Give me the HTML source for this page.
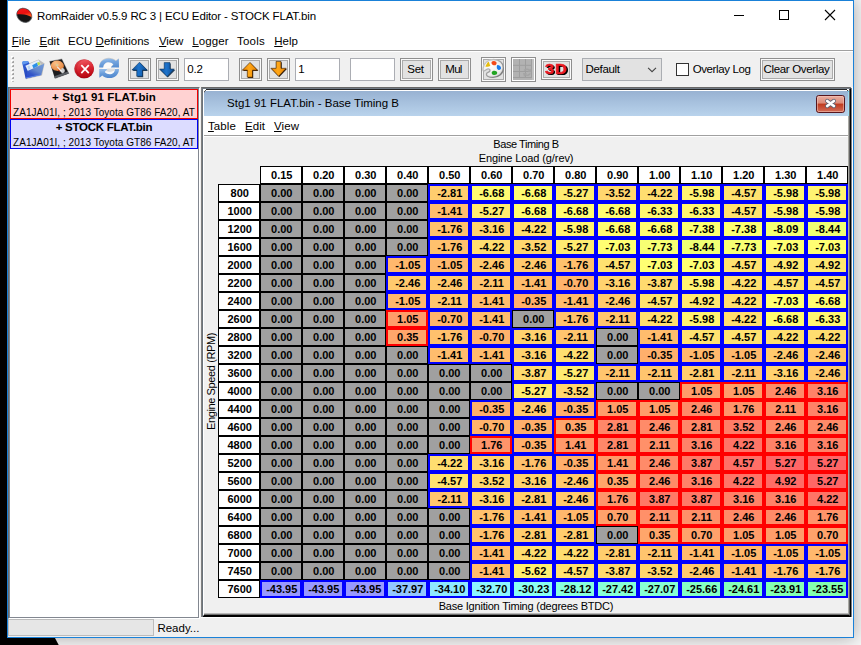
<!DOCTYPE html>
<html>
<head>
<meta charset="utf-8">
<title>RomRaider</title>
<style>
*{box-sizing:border-box;margin:0;padding:0}
html,body{width:861px;height:645px;overflow:hidden}
body{position:relative;background:#f5f5f5;font-family:"Liberation Sans",sans-serif;font-size:12px;color:#000}
.a{position:absolute}
#shadowR{left:854px;top:0;width:7px;height:645px;background:linear-gradient(to right,#d0cdca,#e7e7e7)}
#shadowB{left:0;top:638px;width:861px;height:7px;background:linear-gradient(to bottom,#cfcfcf,#e6e6e6)}
#blackL{left:0;top:0;width:7px;height:645px;background:#000}
#win{left:7px;top:0;width:847px;height:638px;border:1px solid #1a81d8;background:#f0f0f0;box-shadow:0 0 16px 0 rgba(8,4,0,0.32)}
#titlebar{left:8px;top:1px;width:845px;height:30px;background:#fff}
#title{left:37px;top:8.5px;font-size:11.5px;white-space:nowrap;line-height:15px}
#menubar{left:8px;top:31px;width:845px;height:19px;background:#fff}
#menuline{left:8px;top:50px;width:845px;height:1px;background:#a0a0a0}
#menuline2{left:8px;top:51px;width:845px;height:1px;background:#fff}
.mi{position:absolute;top:33.5px;font-size:11.5px;line-height:15px;white-space:nowrap}
.mi u{text-decoration:underline;text-underline-offset:1px}
#toolbar{left:8px;top:52px;width:845px;height:35px;background:#f0f0f0}
.tb{position:absolute;border:1px solid #8e8e8e;background:#e2e2e2;box-shadow:inset 0 0 0 1px #fafafa, inset 0 0 0 2px #ababab}
.tf{position:absolute;border:1px solid #abadb3;background:#fff;font-size:11.5px;line-height:21px;padding-left:2.2px;letter-spacing:-0.15px}
.bt{font-size:11.5px;text-align:center;line-height:21px;letter-spacing:-0.33px;padding-right:2px}
/* tree */
#tree{left:8px;top:87px;width:192px;height:532px;background:#fff;border-style:solid;border-width:1px;border-color:#6d6d6d #fff #fff #6d6d6d}
#tree2{left:9px;top:88px;width:190px;height:530px;background:#fff;border-style:solid;border-width:1px;border-color:#7a8a99 #828790 #828790 #7a8a99}
.ti{position:absolute;left:10px;width:188px;height:30px;text-align:center;white-space:nowrap;overflow:hidden}
.ti b{display:block;font-size:11.5px;line-height:14px;margin-top:0px}
.ti span{display:block;font-size:10px;line-height:13px;margin-top:1.5px;letter-spacing:0.04px}
/* internal frame */
#if1{left:201px;top:87px;width:651px;height:530px;background:#f0f0f0}
#iftitle{left:204px;top:91px;width:644px;height:25px;background:linear-gradient(to bottom,#98b2d2,#b9d3ec)}
#iftext{left:227px;top:96px;font-size:11.5px;line-height:15px;white-space:nowrap}
#ifmenu{left:204px;top:116px;width:644px;height:19px;background:#fff}
#ifmenuline{left:204px;top:135px;width:644px;height:1px;background:#a0a0a0}
#ifmenuline2{left:204px;top:136px;width:644px;height:1px;background:#fff}
.lbl{position:absolute;font-size:11px;line-height:13px;white-space:nowrap;text-align:center}
/* cells */
.c{position:absolute;width:42px;height:18px;font-weight:bold;font-size:11px;line-height:16px;text-align:center;border:1px solid #000;white-space:nowrap;padding-left:1.5px}
.h{background:#fff}
.z{background:#a0a0a0}
.n{border:2px solid #0000ff;line-height:14px}
.p{border:2px solid #ff0000;line-height:14px}
#status{left:8px;top:619px;width:845px;height:18px;background:#f0f0f0}
#prog{left:8px;top:619px;width:146px;height:17px;background:#e6e6e6;border:1px solid #bcbcbc}
#ready{left:157.4px;top:621.4px;font-size:11.5px;line-height:15px}
</style>
</head>
<body>
<div class="a" id="win"></div>
<div class="a" id="blackL"></div>
<svg class="a" style="left:0;top:638px" width="70" height="7"><polygon points="0,0 55,0 58.7,7 0,7" fill="#000"/></svg>
<div class="a" id="titlebar"></div>
<svg class="a" style="left:14px;top:5px" width="20" height="20" viewBox="14 5 20 20">
<defs><linearGradient id="rg" x1="0" y1="0" x2="0.4" y2="1"><stop offset="0" stop-color="#ff2020"/><stop offset="0.7" stop-color="#e81010"/><stop offset="1" stop-color="#ff5a20"/></linearGradient>
<clipPath id="icp"><ellipse cx="24.3" cy="15.3" rx="7.7" ry="6.5" transform="rotate(35 24.3 15.3)"/></clipPath></defs>
<ellipse cx="24.3" cy="15.3" rx="7.9" ry="6.7" transform="rotate(35 24.3 15.3)" fill="#141414" stroke="#565a5e" stroke-width="0.9" stroke-opacity="0.8"/>
<path d="M14 5 L34 5 L34 18.2 C31 17.4 29 15.2 24 14.6 C20.5 14.2 18 14.4 14 14.2 Z" fill="url(#rg)" clip-path="url(#icp)"/>
</svg>
<div class="a" id="title" style="letter-spacing:-0.145px">RomRaider v0.5.9 RC 3 | ECU Editor - STOCK FLAT.bin</div>
<svg class="a" style="left:730px;top:5px" width="115" height="22">
<rect x="4" y="10" width="10" height="1" fill="#000"/>
<rect x="49.5" y="5.5" width="9" height="9" fill="none" stroke="#000" stroke-width="1"/>
<path d="M95 5 L105 15 M105 5 L95 15" stroke="#000" stroke-width="1.1" fill="none"/>
</svg>
<div class="a" id="menubar"></div>
<div class="a" id="menuline"></div>
<div class="a" id="menuline2"></div>
<div class="mi" style="left:11.8px"><u>F</u>ile</div>
<div class="mi" style="left:39.4px;letter-spacing:0.05px"><u>E</u>dit</div>
<div class="mi" style="left:68.1px">ECU <u>D</u>efinitions</div>
<div class="mi" style="left:159px;letter-spacing:-0.15px"><u>V</u>iew</div>
<div class="mi" style="left:192.3px;letter-spacing:0.1px"><u>L</u>ogger</div>
<div class="mi" style="left:237px;letter-spacing:0.22px">Tools</div>
<div class="mi" style="left:274.2px;letter-spacing:0.05px"><u>H</u>elp</div>
<div class="a" id="toolbar"></div>
<svg class="a" style="left:11px;top:56px" width="4" height="28"><rect x="0" y="0" width="2" height="2" fill="#fff"/><rect x="2" y="1" width="1" height="2" fill="#a4a4a4"/><rect x="1" y="2" width="1" height="1" fill="#a4a4a4"/><rect x="1" y="1" width="1" height="1" fill="#d4d4d4"/><rect x="0" y="4" width="2" height="2" fill="#fff"/><rect x="2" y="5" width="1" height="2" fill="#a4a4a4"/><rect x="1" y="6" width="1" height="1" fill="#a4a4a4"/><rect x="1" y="5" width="1" height="1" fill="#d4d4d4"/><rect x="0" y="8" width="2" height="2" fill="#fff"/><rect x="2" y="9" width="1" height="2" fill="#a4a4a4"/><rect x="1" y="10" width="1" height="1" fill="#a4a4a4"/><rect x="1" y="9" width="1" height="1" fill="#d4d4d4"/><rect x="0" y="12" width="2" height="2" fill="#fff"/><rect x="2" y="13" width="1" height="2" fill="#a4a4a4"/><rect x="1" y="14" width="1" height="1" fill="#a4a4a4"/><rect x="1" y="13" width="1" height="1" fill="#d4d4d4"/><rect x="0" y="16" width="2" height="2" fill="#fff"/><rect x="2" y="17" width="1" height="2" fill="#a4a4a4"/><rect x="1" y="18" width="1" height="1" fill="#a4a4a4"/><rect x="1" y="17" width="1" height="1" fill="#d4d4d4"/><rect x="0" y="20" width="2" height="2" fill="#fff"/><rect x="2" y="21" width="1" height="2" fill="#a4a4a4"/><rect x="1" y="22" width="1" height="1" fill="#a4a4a4"/><rect x="1" y="21" width="1" height="1" fill="#d4d4d4"/><rect x="0" y="24" width="2" height="2" fill="#fff"/><rect x="1" y="25" width="2" height="1" fill="#c0c0c0"/></svg>
<svg class="a" style="left:20px;top:57px" width="27" height="24" viewBox="20 57 27 24">
<defs><linearGradient id="fo1" x1="0" y1="0" x2="0.3" y2="1"><stop offset="0" stop-color="#5a96ee"/><stop offset="0.3" stop-color="#2f5cd2"/><stop offset="1" stop-color="#2444b8"/></linearGradient>
<linearGradient id="fo2" x1="0.9" y1="0" x2="0.2" y2="1"><stop offset="0" stop-color="#6e98da"/><stop offset="0.45" stop-color="#6488cc"/><stop offset="0.75" stop-color="#3356c8"/><stop offset="1" stop-color="#2a4ad0"/></linearGradient>
<filter id="fbl" x="-20%" y="-20%" width="140%" height="140%"><feGaussianBlur stdDeviation="0.7"/></filter></defs>
<path d="M25 65 L38.6 59.4 L44.6 63.6 L42 75.6 L26 79.2 Z" fill="#808080" opacity="0.45" filter="url(#fbl)"/>
<path d="M22.2 63 C22.2 61.6 23 61.2 24 61.1 L27 60.9 C28 60.9 28.6 61.6 29 62.6 L30 66 L27 78 L25.6 78.4 Z" fill="url(#fo1)"/>
<path d="M22.3 62.8 C22.3 61.6 23 61.2 24 61.1 L27 60.9 C28 60.9 28.6 61.6 28.9 62.4 L26 63.8 L22.6 64.6 Z" fill="#5f98ee"/><path d="M25.4 65.7 L38.4 60.1 L40.8 64.2 L28 71.5 Z" fill="#e4eefa"/>
<path d="M27.4 66.2 L29.4 65.4 L30.6 69 L28.6 70 Z" fill="#b8d4f4"/>
<path d="M32.2 65.2 L37.2 62.6 L38 66 L33.4 68.4 Z" fill="#2a90e8"/>
<path d="M37.2 62.6 L39.4 61.9 L40.4 64.3 L38 65.6 Z" fill="#b4dc50"/>
<path d="M27.3 71 L44.2 63.8 L41.2 75 L25.8 78.5 Z" fill="url(#fo2)"/>
<path d="M26.2 77.6 L41 74.2 L41.2 75 L25.8 78.5 Z" fill="#5f86e6"/>
</svg>
<svg class="a" style="left:47px;top:56px" width="25" height="25" viewBox="47 56 25 25">
<defs><radialGradient id="dk1" cx="0.35" cy="0.3" r="0.8"><stop offset="0" stop-color="#fac088"/><stop offset="0.6" stop-color="#ee9a58"/><stop offset="1" stop-color="#d87830"/></radialGradient>
<filter id="dbl" x="-20%" y="-20%" width="140%" height="140%"><feGaussianBlur stdDeviation="0.6"/></filter></defs>
<path d="M49.2 61 L62 58.6 L69.4 73.6 L55 79 Z" fill="#777" opacity="0.5" filter="url(#dbl)"/>
<path d="M49.6 61.4 L61.8 59.2 L68.7 73.5 L54.9 78.3 Z" fill="#1c1c1e"/>
<path d="M54.2 76.2 L67.8 71.6 L68.7 73.5 L54.9 78.3 Z" fill="#5a5e64"/>
<ellipse cx="57.4" cy="65.7" rx="6.5" ry="5.2" fill="url(#dk1)" transform="rotate(8 57.4 65.7)"/>
<path d="M61.6 68.2 C63.4 67.8 64.6 69 64.8 70.8 C64.8 72.2 63.6 73.2 62 73.4 L60.6 71.2 Z" fill="#cfd0d2"/>
<rect x="55.8" y="63.9" width="2.6" height="2.2" rx="0.6" fill="#dccb9a"/>
<path d="M56.6 66.8 L57.6 66.4 L62.2 71 L61 72 Z" fill="#eeeeee"/>
<path d="M58.4 69.6 L60 71.2 L59.4 71.8 L58 70.6 Z" fill="#b82c10"/>
</svg>
<svg class="a" style="left:72px;top:57px" width="24" height="24" viewBox="72 57 24 24">
<defs><linearGradient id="rx1" x1="0.3" y1="0" x2="0.6" y2="1"><stop offset="0" stop-color="#e04650"/><stop offset="0.5" stop-color="#c81824"/><stop offset="1" stop-color="#a00010"/></linearGradient>
<linearGradient id="rx2" x1="0.3" y1="0" x2="0.5" y2="1"><stop offset="0" stop-color="#ee5860"/><stop offset="0.5" stop-color="#d82430"/><stop offset="1" stop-color="#b4040e"/></linearGradient>
<filter id="xbl" x="-20%" y="-20%" width="140%" height="140%"><feGaussianBlur stdDeviation="0.6"/></filter></defs>
<ellipse cx="84.1" cy="69" rx="10" ry="9.7" fill="#888" opacity="0.4" filter="url(#xbl)"/>
<ellipse cx="84.1" cy="68.8" rx="9.8" ry="9.5" fill="url(#rx1)"/>
<ellipse cx="85.4" cy="68.8" rx="8.4" ry="9.0" fill="url(#rx2)"/>
<path d="M81.3 65.2 L88.8 73.2 M88.8 65.2 L81.3 73.2" stroke="#fff" stroke-width="1.7" stroke-linecap="butt"/>
</svg>
<svg class="a" style="left:96px;top:55px" width="26" height="26" viewBox="96 55 26 26">
<defs><linearGradient id="rf1" x1="0" y1="0" x2="0.2" y2="1"><stop offset="0" stop-color="#a6caf0"/><stop offset="0.35" stop-color="#7aaae2"/><stop offset="1" stop-color="#5a90d2"/></linearGradient>
<linearGradient id="rf2" x1="0" y1="0" x2="0.2" y2="1"><stop offset="0" stop-color="#4a82ca"/><stop offset="0.6" stop-color="#669ad8"/><stop offset="1" stop-color="#8eb8e8"/></linearGradient>
<filter id="rbl" x="-20%" y="-20%" width="140%" height="140%"><feGaussianBlur stdDeviation="0.7"/></filter></defs>
<ellipse cx="109.4" cy="68.4" rx="7" ry="6" fill="#fafafa" filter="url(#rbl)"/>
<path d="M104 69.6 C106 72.4 112 72.8 115.4 69.8 L115 68.6 L108 68.6 Z" fill="#c4c6c8" opacity="0.55" filter="url(#rbl)"/>
<path d="M99.2 67.6 C99.2 62 103.5 58.4 108.6 58.4 C111.5 58.4 114 59.4 115.9 61.1 L118.8 58.8 L119 67.6 L110.8 67.5 L113.5 64.4 C112 63 110.4 62.2 108.6 62.2 C105.6 62.2 103.4 64.2 103.2 67.6 Z" fill="#8a8a8a" opacity="0.35" filter="url(#rbl)" transform="translate(0,-0.6)"/>
<path d="M99.2 67.6 C99.2 62 103.5 58.4 108.6 58.4 C111.5 58.4 114 59.4 115.9 61.1 L118.8 58.8 L119 67.6 L110.8 67.5 L113.5 64.4 C112 63 110.4 62.2 108.6 62.2 C105.6 62.2 103.4 64.2 103.2 67.6 Z" fill="url(#rf1)"/>
<path d="M99.2 67.6 C99.2 62 103.5 58.4 108.6 58.4 C111.5 58.4 114 59.4 115.9 61.1 L118.8 58.8 L119 67.6 L110.8 67.5 L113.5 64.4 C112 63 110.4 62.2 108.6 62.2 C105.6 62.2 103.4 64.2 103.2 67.6 Z" fill="url(#rf2)" transform="rotate(180 109.1 68.25)"/>
</svg>
<div class="tb" style="left:128px;top:58px;width:23px;height:23px"><svg width="23" height="23" viewBox="0 0 23 23" style="position:absolute;left:-1px;top:-1px">
<defs><linearGradient id="g1e74ccu" x1="0" y1="0" x2="1" y2="0"><stop offset="0" stop-color="#0c4c94"/><stop offset="0.45" stop-color="#1e74cc"/><stop offset="1" stop-color="#0c4c94"/></linearGradient></defs>
<path d="M11.6 4.4 L19.4 12.2 L14.6 12.2 L14.6 18.6 L8.8 18.6 L8.8 12.2 L4.0 12.2 Z" fill="#082848" transform="translate(0.6,0.7)" opacity="0.85"/>
<path d="M11.5 4.2 L19.2 12 L14.5 12 L14.5 18.3 L8.7 18.3 L8.7 12 L3.9 12 Z" fill="url(#g1e74ccu)" stroke="#082848" stroke-width="0.5"/>
</svg></div>
<div class="tb" style="left:156px;top:58px;width:23px;height:23px"><svg width="23" height="23" viewBox="0 0 23 23" style="position:absolute;left:-1px;top:-1px">
<defs><linearGradient id="g1e74ccd" x1="0" y1="0" x2="1" y2="0"><stop offset="0" stop-color="#0c4c94"/><stop offset="0.45" stop-color="#1e74cc"/><stop offset="1" stop-color="#0c4c94"/></linearGradient></defs>
<path d="M8.3 4.8 L14.1 4.8 L14.1 11.2 L18.6 11.2 L11.2 18.8 L3.6 11.2 L8.3 11.2 Z" fill="#082848" transform="translate(0.6,0.7)" opacity="0.85"/>
<path d="M8.2 4.6 L14 4.6 L14 11 L18.4 11 L11.1 18.6 L3.5 11 L8.2 11 Z" fill="url(#g1e74ccd)" stroke="#082848" stroke-width="0.5"/>
</svg></div>
<div class="tf" style="left:184px;top:58px;width:45px;height:23px">0.2</div>
<div class="tb" style="left:239px;top:58px;width:23px;height:23px"><svg width="23" height="23" viewBox="0 0 23 23" style="position:absolute;left:-1px;top:-1px">
<defs><linearGradient id="gffa818u" x1="0" y1="0" x2="1" y2="0"><stop offset="0" stop-color="#e88000"/><stop offset="0.45" stop-color="#ffa818"/><stop offset="1" stop-color="#e88000"/></linearGradient></defs>
<path d="M11 4.4 L18.6 12.2 L13.5 12.2 L13.5 19.2 L8.3 19.2 L8.3 12.2 L3.3 12.2 Z" fill="#1c0c00" transform="translate(0.7,0.8)" opacity="0.95"/>
<path d="M11 4.4 L18.6 12.2 L13.5 12.2 L13.5 19.2 L8.3 19.2 L8.3 12.2 L3.3 12.2 Z" fill="url(#gffa818u)" stroke="#301800" stroke-width="0.6"/>
</svg></div>
<div class="tb" style="left:267px;top:58px;width:23px;height:23px"><svg width="23" height="23" viewBox="0 0 23 23" style="position:absolute;left:-1px;top:-1px">
<defs><linearGradient id="gffa818d" x1="0" y1="0" x2="1" y2="0"><stop offset="0" stop-color="#e88000"/><stop offset="0.45" stop-color="#ffa818"/><stop offset="1" stop-color="#e88000"/></linearGradient></defs>
<path d="M9.1 3.4 L14 3.4 L14 10.3 L19.2 10.3 L11.6 18.3 L3.9 10.3 L9.1 10.3 Z" fill="#1c0c00" transform="translate(0.7,0.8)" opacity="0.95"/>
<path d="M9.1 3.4 L14 3.4 L14 10.3 L19.2 10.3 L11.6 18.3 L3.9 10.3 L9.1 10.3 Z" fill="url(#gffa818d)" stroke="#301800" stroke-width="0.6"/>
</svg></div>
<div class="tf" style="left:295px;top:58px;width:45px;height:23px">1</div>
<div class="tf" style="left:350px;top:58px;width:45px;height:23px"></div>
<div class="tb bt" style="left:400px;top:58px;width:33px;height:23px">Set</div>
<div class="tb bt" style="left:438px;top:58px;width:33px;height:23px;letter-spacing:-0.66px">Mul</div>
<div class="tb" style="left:481px;top:57px;width:25px;height:25px"><svg width="25" height="25" viewBox="0 0 25 25" style="position:absolute;left:-1px;top:-1px">
<defs><radialGradient id="pl1" cx="0.4" cy="0.35" r="0.8"><stop offset="0" stop-color="#ffffff"/><stop offset="0.65" stop-color="#ececec"/><stop offset="1" stop-color="#b4b4b4"/></radialGradient>
<linearGradient id="pl2" x1="0" y1="0" x2="1" y2="1"><stop offset="0" stop-color="#d8d8d8"/><stop offset="0.5" stop-color="#a0a0a0"/><stop offset="1" stop-color="#6e6e6e"/></linearGradient></defs>
<path d="M12.6 2.5 C18.8 2.5 22.4 6.4 22.4 11 C22.4 16.6 17.6 20.4 12 20.4 C8.4 20.4 5.6 19 5.4 17.2 C5.2 15.8 6.8 15.4 8 14.8 C9.2 14.2 9.4 12.6 8 12 C6.4 11.4 4.4 13.4 3 14 C2 14.4 1.9 12.6 2 11.4 C2.6 6.2 7 2.5 12.6 2.5 Z" fill="url(#pl1)" stroke="url(#pl2)" stroke-width="1.3"/>
<path d="M4.2 9.2 C5.4 8.6 5.8 6 6.8 5.2 C7.6 4.8 8.2 5.4 8.4 6.4 C8.6 7.6 9.6 8.2 9.2 9 C8 9.8 5.4 10 4.2 9.2 Z" fill="#e6bc0c"/>
<path d="M10.6 5 C11.4 3.8 14 3.8 15.2 5 C16 6 15.6 7.6 14.4 8.2 C13.2 8.6 11.4 8 10.8 7 C10.4 6.4 10.4 5.6 10.6 5 Z" fill="#f44a1a"/>
<path d="M16.2 8.2 C17.6 7.8 19.6 9 20 10.8 C20.2 12.2 19 13.2 17.6 13 C16.4 12.6 15.6 11.4 15.8 10 C15.8 9.2 15.8 8.6 16.2 8.2 Z" fill="#1a7cec"/>
<path d="M10.8 15 C11.8 13.6 14.2 13.4 15.6 14.6 C16.6 15.4 16.4 16.8 15.4 17.6 C14 18.4 11.8 18.2 11 17 C10.6 16.4 10.6 15.6 10.8 15 Z" fill="#22a422"/>
</svg></div>
<div class="a" style="left:511px;top:57px;width:25px;height:25px;border:1px solid #8e8e8e;background:#fff"><svg width="21" height="21" viewBox="0 0 21 21" style="position:absolute;left:1px;top:1px">
<rect x="0" y="0" width="21" height="21" fill="#b2b2b2"/>
<path d="M6.5 0 V19 M12.5 0 V19 M18.5 0 V19 M0 6.3 H19 M0 12.5 H19 M0 18.5 H19" stroke="#9e9e9e" stroke-width="1"/>
<rect x="19" y="0" width="2" height="21" fill="#c8c8c8" opacity="0.7"/>
<path d="M10.5 11 C12 9.4 15 9 17 10.4 L18.2 9.2 L18.4 13.2 L14.4 13 L15.6 11.8 C14.4 11 12.8 11.2 12 12.2 Z" fill="#a4a4a4"/>
<path d="M18 14.4 C17 16.6 14.4 17.6 12 16.6 L11 18 L10 14 L14 14.2 L13 15.4 C14.2 15.8 15.6 15.4 16.2 14.2 Z" fill="#a4a4a4"/>
</svg></div>
<div class="tb" style="left:541px;top:59px;width:31px;height:21px"><div style="position:absolute;left:1.5px;top:0px;width:25px;text-align:center;font-weight:bold;font-size:15px;line-height:18.6px;color:#ea1a22;text-shadow:1px 1px 0 #000,1.4px 1.4px 0 #000;-webkit-text-stroke:0.5px #ea1a22;letter-spacing:0.9px;transform:scaleX(1.1);transform-origin:50% 50%">3D</div></div>
<div class="a ol" style="left:582px;top:58px;width:80px;height:23px;border:1px solid #abaeb3;background:#e2e2e2;font-size:11.5px;line-height:21px;padding-left:2.4px;letter-spacing:-0.3px">Default</div>
<svg class="a" style="left:647px;top:66px" width="10" height="7"><path d="M1.1 1.9 L5.05 5.7 L9 1.9" stroke="#444" stroke-width="1.1" fill="none"/></svg>
<div class="a" style="left:676px;top:63px;width:13px;height:13px;border:1px solid #333;background:#fff"></div>
<div class="a ol" style="left:692.7px;top:62px;font-size:11.5px;letter-spacing:-0.39px;line-height:15px;white-space:nowrap">Overlay Log</div>
<div class="tb bt" style="left:760px;top:58px;width:75px;height:23px;white-space:nowrap">Clear Overlay</div>
<div class="a" id="tree"></div>
<div class="a" id="tree2"></div>
<div class="ti" style="top:89px;border:1px solid #f20000;background:#ffd2d2"><b style="letter-spacing:0.13px">+ Stg1 91 FLAT.bin</b><span>ZA1JA01I, ; 2013 Toyota GT86 FA20, AT</span></div>
<div class="ti" style="top:119px;border:1px solid #0000f2;background:#dcdcff"><b style="letter-spacing:-0.27px">+ STOCK FLAT.bin</b><span>ZA1JA01I, ; 2013 Toyota GT86 FA20, AT</span></div>
<div class="a" id="if1"></div>
<div class="a" style="left:201px;top:87px;width:650px;height:530px;border-style:solid;border-width:1px;border-color:#686868 #8a8a8a #000 #808080;pointer-events:none"></div>
<div class="a" style="left:202px;top:88px;width:649px;height:529px;border-style:solid;border-width:1px;border-color:#717a84 #000 #000 #6a727a"></div>
<div class="a" style="left:203px;top:89px;width:647px;height:527px;border-style:solid;border-width:1px;border-color:#262626 #646464 #000 #fff"></div>
<div class="a" style="left:204px;top:90px;width:645px;height:1px;background:#fff"></div>
<div class="a" style="left:204px;top:613px;width:645px;height:1px;background:#b8b8b8"></div><div class="a" style="left:204px;top:614px;width:646px;height:1px;background:#707070"></div><div class="a" style="left:201px;top:617px;width:651px;height:1px;background:#fff"></div><div class="a" style="left:851px;top:88px;width:1px;height:529px;background:#7a7c82"></div><div class="a" style="left:852px;top:87px;width:1px;height:531px;background:#fff"></div>
<div class="a" style="left:848px;top:91px;width:1px;height:523px;background:#aaaaa4"></div>

<div class="a" style="left:201px;top:613px;width:1px;height:4px;background:#808080"></div><div class="a" style="left:202px;top:613px;width:1px;height:4px;background:#6a727a"></div>
<div class="a" id="iftitle"></div>
<div class="a" style="left:848px;top:91px;width:1px;height:25px;background:#9fdcf0"></div>
<svg class="a" style="left:203px;top:89px" width="5" height="5"><rect x="0" y="0" width="3" height="1" fill="#fff"/><rect x="0" y="1" width="2" height="1" fill="#fff"/><rect x="2" y="1" width="1" height="1" fill="#555"/><rect x="1" y="2" width="1" height="1" fill="#555"/><rect x="1" y="3" width="1" height="1" fill="#8a9ab0"/></svg>
<svg class="a" style="left:845px;top:89px" width="5" height="5"><rect x="2" y="0" width="2" height="1" fill="#fff"/><rect x="2" y="1" width="1" height="1" fill="#444"/><rect x="3" y="1" width="1" height="1" fill="#ddd"/><rect x="3" y="2" width="1" height="1" fill="#50c8e8"/></svg>
<div class="a" id="iftext" style="letter-spacing:0.01px">Stg1 91 FLAT.bin - Base Timing B</div>
<svg class="a" style="left:816px;top:95px" width="29" height="18" viewBox="0 0 29 18">
<defs><linearGradient id="cb1" x1="0" y1="0" x2="0" y2="1"><stop offset="0" stop-color="#eab0a4"/><stop offset="0.45" stop-color="#dc8a78"/><stop offset="0.5" stop-color="#bf3a1e"/><stop offset="1" stop-color="#d4705c"/></linearGradient></defs>
<rect x="0.5" y="0.5" width="28" height="17" rx="2.2" fill="url(#cb1)" stroke="#56161e" stroke-width="1"/>
<rect x="1.5" y="1.5" width="26" height="15" rx="1.5" fill="none" stroke="#f4c8bc" stroke-opacity="0.55" stroke-width="1"/>
<path d="M11.2 6 L17.9 11 M17.9 6 L11.2 11" stroke="#5e6070" stroke-width="4.2" stroke-linecap="round"/>
<path d="M11.2 6 L17.9 11 M17.9 6 L11.2 11" stroke="#fff" stroke-width="2.7" stroke-linecap="round"/>
</svg>
<div class="a" id="ifmenu"></div>
<div class="a" id="ifmenuline"></div>
<div class="a" id="ifmenuline2"></div>
<div class="mi" style="left:208px;top:119px;letter-spacing:0.08px"><u>T</u>able</div>
<div class="mi" style="left:245.1px;top:119px"><u>E</u>dit</div>
<div class="mi" style="left:274px;top:119px;letter-spacing:0.1px"><u>V</u>iew</div>
<div class="lbl" style="left:426px;top:138px;width:200px;letter-spacing:-0.43px">Base Timing B</div>
<div class="lbl" style="left:426px;top:152px;width:200px;letter-spacing:-0.1px">Engine Load (g/rev)</div>
<div class="lbl" style="left:426px;top:600px;width:200px;letter-spacing:-0.22px">Base Ignition Timing (degrees BTDC)</div>
<div class="lbl" style="left:111px;top:375px;width:200px;transform:rotate(-90deg);letter-spacing:-0.39px">Engine Speed (RPM)</div>
<div class="c h" style="left:260px;top:166px">0.15</div>
<div class="c h" style="left:302px;top:166px">0.20</div>
<div class="c h" style="left:344px;top:166px">0.30</div>
<div class="c h" style="left:386px;top:166px">0.40</div>
<div class="c h" style="left:428px;top:166px">0.50</div>
<div class="c h" style="left:470px;top:166px">0.60</div>
<div class="c h" style="left:512px;top:166px">0.70</div>
<div class="c h" style="left:554px;top:166px">0.80</div>
<div class="c h" style="left:596px;top:166px">0.90</div>
<div class="c h" style="left:638px;top:166px">1.00</div>
<div class="c h" style="left:680px;top:166px">1.10</div>
<div class="c h" style="left:722px;top:166px">1.20</div>
<div class="c h" style="left:764px;top:166px">1.30</div>
<div class="c h" style="left:806px;top:166px">1.40</div>
<div class="c h" style="left:218px;top:184px">800</div>
<div class="c z" style="left:260px;top:184px">0.00</div>
<div class="c z" style="left:302px;top:184px">0.00</div>
<div class="c z" style="left:344px;top:184px">0.00</div>
<div class="c z" style="left:386px;top:184px">0.00</div>
<div class="c n" style="left:428px;top:184px;background:#ffcd6e">-2.81</div>
<div class="c n" style="left:470px;top:184px;background:#fffb72">-6.68</div>
<div class="c n" style="left:512px;top:184px;background:#fffb72">-6.68</div>
<div class="c n" style="left:554px;top:184px;background:#ffeb71">-5.27</div>
<div class="c n" style="left:596px;top:184px;background:#ffd66f">-3.52</div>
<div class="c n" style="left:638px;top:184px;background:#ffde70">-4.22</div>
<div class="c n" style="left:680px;top:184px;background:#fff372">-5.98</div>
<div class="c n" style="left:722px;top:184px;background:#ffe270">-4.57</div>
<div class="c n" style="left:764px;top:184px;background:#fff372">-5.98</div>
<div class="c n" style="left:806px;top:184px;background:#fff372">-5.98</div>
<div class="c h" style="left:218px;top:202px">1000</div>
<div class="c z" style="left:260px;top:202px">0.00</div>
<div class="c z" style="left:302px;top:202px">0.00</div>
<div class="c z" style="left:344px;top:202px">0.00</div>
<div class="c z" style="left:386px;top:202px">0.00</div>
<div class="c n" style="left:428px;top:202px;background:#ffbc6d">-1.41</div>
<div class="c n" style="left:470px;top:202px;background:#ffeb71">-5.27</div>
<div class="c n" style="left:512px;top:202px;background:#fffb72">-6.68</div>
<div class="c n" style="left:554px;top:202px;background:#fffb72">-6.68</div>
<div class="c n" style="left:596px;top:202px;background:#fffb72">-6.68</div>
<div class="c n" style="left:638px;top:202px;background:#fff772">-6.33</div>
<div class="c n" style="left:680px;top:202px;background:#fff772">-6.33</div>
<div class="c n" style="left:722px;top:202px;background:#ffe270">-4.57</div>
<div class="c n" style="left:764px;top:202px;background:#fff372">-5.98</div>
<div class="c n" style="left:806px;top:202px;background:#fff372">-5.98</div>
<div class="c h" style="left:218px;top:220px">1200</div>
<div class="c z" style="left:260px;top:220px">0.00</div>
<div class="c z" style="left:302px;top:220px">0.00</div>
<div class="c z" style="left:344px;top:220px">0.00</div>
<div class="c z" style="left:386px;top:220px">0.00</div>
<div class="c n" style="left:428px;top:220px;background:#ffc16d">-1.76</div>
<div class="c n" style="left:470px;top:220px;background:#ffd26f">-3.16</div>
<div class="c n" style="left:512px;top:220px;background:#ffde70">-4.22</div>
<div class="c n" style="left:554px;top:220px;background:#fff372">-5.98</div>
<div class="c n" style="left:596px;top:220px;background:#fffb72">-6.68</div>
<div class="c n" style="left:638px;top:220px;background:#fffb72">-6.68</div>
<div class="c n" style="left:680px;top:220px;background:#fbff73">-7.38</div>
<div class="c n" style="left:722px;top:220px;background:#fbff73">-7.38</div>
<div class="c n" style="left:764px;top:220px;background:#f3ff74">-8.09</div>
<div class="c n" style="left:806px;top:220px;background:#efff74">-8.44</div>
<div class="c h" style="left:218px;top:238px">1600</div>
<div class="c z" style="left:260px;top:238px">0.00</div>
<div class="c z" style="left:302px;top:238px">0.00</div>
<div class="c z" style="left:344px;top:238px">0.00</div>
<div class="c z" style="left:386px;top:238px">0.00</div>
<div class="c n" style="left:428px;top:238px;background:#ffc16d">-1.76</div>
<div class="c n" style="left:470px;top:238px;background:#ffde70">-4.22</div>
<div class="c n" style="left:512px;top:238px;background:#ffd66f">-3.52</div>
<div class="c n" style="left:554px;top:238px;background:#ffeb71">-5.27</div>
<div class="c n" style="left:596px;top:238px;background:#ffff73">-7.03</div>
<div class="c n" style="left:638px;top:238px;background:#f7ff73">-7.73</div>
<div class="c n" style="left:680px;top:238px;background:#efff74">-8.44</div>
<div class="c n" style="left:722px;top:238px;background:#f7ff73">-7.73</div>
<div class="c n" style="left:764px;top:238px;background:#ffff73">-7.03</div>
<div class="c n" style="left:806px;top:238px;background:#ffff73">-7.03</div>
<div class="c h" style="left:218px;top:256px">2000</div>
<div class="c z" style="left:260px;top:256px">0.00</div>
<div class="c z" style="left:302px;top:256px">0.00</div>
<div class="c z" style="left:344px;top:256px">0.00</div>
<div class="c n" style="left:386px;top:256px;background:#ffb86d">-1.05</div>
<div class="c n" style="left:428px;top:256px;background:#ffb86d">-1.05</div>
<div class="c n" style="left:470px;top:256px;background:#ffc96e">-2.46</div>
<div class="c n" style="left:512px;top:256px;background:#ffc96e">-2.46</div>
<div class="c n" style="left:554px;top:256px;background:#ffc16d">-1.76</div>
<div class="c n" style="left:596px;top:256px;background:#ffe270">-4.57</div>
<div class="c n" style="left:638px;top:256px;background:#ffff73">-7.03</div>
<div class="c n" style="left:680px;top:256px;background:#ffff73">-7.03</div>
<div class="c n" style="left:722px;top:256px;background:#ffe270">-4.57</div>
<div class="c n" style="left:764px;top:256px;background:#ffe771">-4.92</div>
<div class="c n" style="left:806px;top:256px;background:#ffe771">-4.92</div>
<div class="c h" style="left:218px;top:274px">2200</div>
<div class="c z" style="left:260px;top:274px">0.00</div>
<div class="c z" style="left:302px;top:274px">0.00</div>
<div class="c z" style="left:344px;top:274px">0.00</div>
<div class="c n" style="left:386px;top:274px;background:#ffc96e">-2.46</div>
<div class="c n" style="left:428px;top:274px;background:#ffc96e">-2.46</div>
<div class="c n" style="left:470px;top:274px;background:#ffc56e">-2.11</div>
<div class="c n" style="left:512px;top:274px;background:#ffbc6d">-1.41</div>
<div class="c n" style="left:554px;top:274px;background:#ffb36c">-0.70</div>
<div class="c n" style="left:596px;top:274px;background:#ffd26f">-3.16</div>
<div class="c n" style="left:638px;top:274px;background:#ffda6f">-3.87</div>
<div class="c n" style="left:680px;top:274px;background:#fff372">-5.98</div>
<div class="c n" style="left:722px;top:274px;background:#ffde70">-4.22</div>
<div class="c n" style="left:764px;top:274px;background:#ffe270">-4.57</div>
<div class="c n" style="left:806px;top:274px;background:#ffe270">-4.57</div>
<div class="c h" style="left:218px;top:292px">2400</div>
<div class="c z" style="left:260px;top:292px">0.00</div>
<div class="c z" style="left:302px;top:292px">0.00</div>
<div class="c z" style="left:344px;top:292px">0.00</div>
<div class="c n" style="left:386px;top:292px;background:#ffb86d">-1.05</div>
<div class="c n" style="left:428px;top:292px;background:#ffc56e">-2.11</div>
<div class="c n" style="left:470px;top:292px;background:#ffbc6d">-1.41</div>
<div class="c n" style="left:512px;top:292px;background:#ffaf6c">-0.35</div>
<div class="c n" style="left:554px;top:292px;background:#ffbc6d">-1.41</div>
<div class="c n" style="left:596px;top:292px;background:#ffc96e">-2.46</div>
<div class="c n" style="left:638px;top:292px;background:#ffe270">-4.57</div>
<div class="c n" style="left:680px;top:292px;background:#ffe771">-4.92</div>
<div class="c n" style="left:722px;top:292px;background:#ffde70">-4.22</div>
<div class="c n" style="left:764px;top:292px;background:#ffff73">-7.03</div>
<div class="c n" style="left:806px;top:292px;background:#fffb72">-6.68</div>
<div class="c h" style="left:218px;top:310px">2600</div>
<div class="c z" style="left:260px;top:310px">0.00</div>
<div class="c z" style="left:302px;top:310px">0.00</div>
<div class="c z" style="left:344px;top:310px">0.00</div>
<div class="c p" style="left:386px;top:310px;background:#ff9d6a">1.05</div>
<div class="c n" style="left:428px;top:310px;background:#ffb36c">-0.70</div>
<div class="c n" style="left:470px;top:310px;background:#ffbc6d">-1.41</div>
<div class="c z" style="left:512px;top:310px">0.00</div>
<div class="c n" style="left:554px;top:310px;background:#ffc16d">-1.76</div>
<div class="c n" style="left:596px;top:310px;background:#ffc56e">-2.11</div>
<div class="c n" style="left:638px;top:310px;background:#ffde70">-4.22</div>
<div class="c n" style="left:680px;top:310px;background:#fff372">-5.98</div>
<div class="c n" style="left:722px;top:310px;background:#ffde70">-4.22</div>
<div class="c n" style="left:764px;top:310px;background:#fffb72">-6.68</div>
<div class="c n" style="left:806px;top:310px;background:#fff772">-6.33</div>
<div class="c h" style="left:218px;top:328px">2800</div>
<div class="c z" style="left:260px;top:328px">0.00</div>
<div class="c z" style="left:302px;top:328px">0.00</div>
<div class="c z" style="left:344px;top:328px">0.00</div>
<div class="c p" style="left:386px;top:328px;background:#ffa66b">0.35</div>
<div class="c n" style="left:428px;top:328px;background:#ffc16d">-1.76</div>
<div class="c n" style="left:470px;top:328px;background:#ffb36c">-0.70</div>
<div class="c n" style="left:512px;top:328px;background:#ffd26f">-3.16</div>
<div class="c n" style="left:554px;top:328px;background:#ffc56e">-2.11</div>
<div class="c z" style="left:596px;top:328px">0.00</div>
<div class="c n" style="left:638px;top:328px;background:#ffbc6d">-1.41</div>
<div class="c n" style="left:680px;top:328px;background:#ffe270">-4.57</div>
<div class="c n" style="left:722px;top:328px;background:#ffe270">-4.57</div>
<div class="c n" style="left:764px;top:328px;background:#ffde70">-4.22</div>
<div class="c n" style="left:806px;top:328px;background:#ffde70">-4.22</div>
<div class="c h" style="left:218px;top:346px">3200</div>
<div class="c z" style="left:260px;top:346px">0.00</div>
<div class="c z" style="left:302px;top:346px">0.00</div>
<div class="c z" style="left:344px;top:346px">0.00</div>
<div class="c z" style="left:386px;top:346px">0.00</div>
<div class="c n" style="left:428px;top:346px;background:#ffbc6d">-1.41</div>
<div class="c n" style="left:470px;top:346px;background:#ffbc6d">-1.41</div>
<div class="c n" style="left:512px;top:346px;background:#ffd26f">-3.16</div>
<div class="c n" style="left:554px;top:346px;background:#ffde70">-4.22</div>
<div class="c z" style="left:596px;top:346px">0.00</div>
<div class="c n" style="left:638px;top:346px;background:#ffaf6c">-0.35</div>
<div class="c n" style="left:680px;top:346px;background:#ffb86d">-1.05</div>
<div class="c n" style="left:722px;top:346px;background:#ffb86d">-1.05</div>
<div class="c n" style="left:764px;top:346px;background:#ffc96e">-2.46</div>
<div class="c n" style="left:806px;top:346px;background:#ffc96e">-2.46</div>
<div class="c h" style="left:218px;top:364px">3600</div>
<div class="c z" style="left:260px;top:364px">0.00</div>
<div class="c z" style="left:302px;top:364px">0.00</div>
<div class="c z" style="left:344px;top:364px">0.00</div>
<div class="c z" style="left:386px;top:364px">0.00</div>
<div class="c z" style="left:428px;top:364px">0.00</div>
<div class="c z" style="left:470px;top:364px">0.00</div>
<div class="c n" style="left:512px;top:364px;background:#ffda6f">-3.87</div>
<div class="c n" style="left:554px;top:364px;background:#ffeb71">-5.27</div>
<div class="c n" style="left:596px;top:364px;background:#ffc56e">-2.11</div>
<div class="c n" style="left:638px;top:364px;background:#ffc56e">-2.11</div>
<div class="c n" style="left:680px;top:364px;background:#ffcd6e">-2.81</div>
<div class="c n" style="left:722px;top:364px;background:#ffc56e">-2.11</div>
<div class="c n" style="left:764px;top:364px;background:#ffd26f">-3.16</div>
<div class="c n" style="left:806px;top:364px;background:#ffc96e">-2.46</div>
<div class="c h" style="left:218px;top:382px">4000</div>
<div class="c z" style="left:260px;top:382px">0.00</div>
<div class="c z" style="left:302px;top:382px">0.00</div>
<div class="c z" style="left:344px;top:382px">0.00</div>
<div class="c z" style="left:386px;top:382px">0.00</div>
<div class="c z" style="left:428px;top:382px">0.00</div>
<div class="c z" style="left:470px;top:382px">0.00</div>
<div class="c n" style="left:512px;top:382px;background:#ffeb71">-5.27</div>
<div class="c n" style="left:554px;top:382px;background:#ffd66f">-3.52</div>
<div class="c z" style="left:596px;top:382px">0.00</div>
<div class="c z" style="left:638px;top:382px">0.00</div>
<div class="c p" style="left:680px;top:382px;background:#ff9d6a">1.05</div>
<div class="c p" style="left:722px;top:382px;background:#ff9d6a">1.05</div>
<div class="c p" style="left:764px;top:382px;background:#ff8b69">2.46</div>
<div class="c p" style="left:806px;top:382px;background:#ff8268">3.16</div>
<div class="c h" style="left:218px;top:400px">4400</div>
<div class="c z" style="left:260px;top:400px">0.00</div>
<div class="c z" style="left:302px;top:400px">0.00</div>
<div class="c z" style="left:344px;top:400px">0.00</div>
<div class="c z" style="left:386px;top:400px">0.00</div>
<div class="c z" style="left:428px;top:400px">0.00</div>
<div class="c n" style="left:470px;top:400px;background:#ffaf6c">-0.35</div>
<div class="c n" style="left:512px;top:400px;background:#ffc96e">-2.46</div>
<div class="c n" style="left:554px;top:400px;background:#ffaf6c">-0.35</div>
<div class="c p" style="left:596px;top:400px;background:#ff9d6a">1.05</div>
<div class="c p" style="left:638px;top:400px;background:#ff9d6a">1.05</div>
<div class="c p" style="left:680px;top:400px;background:#ff8b69">2.46</div>
<div class="c p" style="left:722px;top:400px;background:#ff946a">1.76</div>
<div class="c p" style="left:764px;top:400px;background:#ff9069">2.11</div>
<div class="c p" style="left:806px;top:400px;background:#ff8268">3.16</div>
<div class="c h" style="left:218px;top:418px">4600</div>
<div class="c z" style="left:260px;top:418px">0.00</div>
<div class="c z" style="left:302px;top:418px">0.00</div>
<div class="c z" style="left:344px;top:418px">0.00</div>
<div class="c z" style="left:386px;top:418px">0.00</div>
<div class="c z" style="left:428px;top:418px">0.00</div>
<div class="c n" style="left:470px;top:418px;background:#ffb36c">-0.70</div>
<div class="c n" style="left:512px;top:418px;background:#ffaf6c">-0.35</div>
<div class="c p" style="left:554px;top:418px;background:#ffa66b">0.35</div>
<div class="c p" style="left:596px;top:418px;background:#ff8769">2.81</div>
<div class="c p" style="left:638px;top:418px;background:#ff8b69">2.46</div>
<div class="c p" style="left:680px;top:418px;background:#ff8769">2.81</div>
<div class="c p" style="left:722px;top:418px;background:#ff7d68">3.52</div>
<div class="c p" style="left:764px;top:418px;background:#ff8b69">2.46</div>
<div class="c p" style="left:806px;top:418px;background:#ff8b69">2.46</div>
<div class="c h" style="left:218px;top:436px">4800</div>
<div class="c z" style="left:260px;top:436px">0.00</div>
<div class="c z" style="left:302px;top:436px">0.00</div>
<div class="c z" style="left:344px;top:436px">0.00</div>
<div class="c z" style="left:386px;top:436px">0.00</div>
<div class="c z" style="left:428px;top:436px">0.00</div>
<div class="c p" style="left:470px;top:436px;background:#ff946a">1.76</div>
<div class="c n" style="left:512px;top:436px;background:#ffaf6c">-0.35</div>
<div class="c p" style="left:554px;top:436px;background:#ff996a">1.41</div>
<div class="c p" style="left:596px;top:436px;background:#ff8769">2.81</div>
<div class="c p" style="left:638px;top:436px;background:#ff9069">2.11</div>
<div class="c p" style="left:680px;top:436px;background:#ff8268">3.16</div>
<div class="c p" style="left:722px;top:436px;background:#ff7467">4.22</div>
<div class="c p" style="left:764px;top:436px;background:#ff8268">3.16</div>
<div class="c p" style="left:806px;top:436px;background:#ff8268">3.16</div>
<div class="c h" style="left:218px;top:454px">5200</div>
<div class="c z" style="left:260px;top:454px">0.00</div>
<div class="c z" style="left:302px;top:454px">0.00</div>
<div class="c z" style="left:344px;top:454px">0.00</div>
<div class="c z" style="left:386px;top:454px">0.00</div>
<div class="c n" style="left:428px;top:454px;background:#ffde70">-4.22</div>
<div class="c n" style="left:470px;top:454px;background:#ffd26f">-3.16</div>
<div class="c n" style="left:512px;top:454px;background:#ffc16d">-1.76</div>
<div class="c n" style="left:554px;top:454px;background:#ffaf6c">-0.35</div>
<div class="c p" style="left:596px;top:454px;background:#ff996a">1.41</div>
<div class="c p" style="left:638px;top:454px;background:#ff8b69">2.46</div>
<div class="c p" style="left:680px;top:454px;background:#ff7967">3.87</div>
<div class="c p" style="left:722px;top:454px;background:#ff6f67">4.57</div>
<div class="c p" style="left:764px;top:454px;background:#ff6666">5.27</div>
<div class="c p" style="left:806px;top:454px;background:#ff6666">5.27</div>
<div class="c h" style="left:218px;top:472px">5600</div>
<div class="c z" style="left:260px;top:472px">0.00</div>
<div class="c z" style="left:302px;top:472px">0.00</div>
<div class="c z" style="left:344px;top:472px">0.00</div>
<div class="c z" style="left:386px;top:472px">0.00</div>
<div class="c n" style="left:428px;top:472px;background:#ffe270">-4.57</div>
<div class="c n" style="left:470px;top:472px;background:#ffd66f">-3.52</div>
<div class="c n" style="left:512px;top:472px;background:#ffd26f">-3.16</div>
<div class="c n" style="left:554px;top:472px;background:#ffc96e">-2.46</div>
<div class="c p" style="left:596px;top:472px;background:#ffa66b">0.35</div>
<div class="c p" style="left:638px;top:472px;background:#ff8b69">2.46</div>
<div class="c p" style="left:680px;top:472px;background:#ff8268">3.16</div>
<div class="c p" style="left:722px;top:472px;background:#ff7467">4.22</div>
<div class="c p" style="left:764px;top:472px;background:#ff6b66">4.92</div>
<div class="c p" style="left:806px;top:472px;background:#ff6666">5.27</div>
<div class="c h" style="left:218px;top:490px">6000</div>
<div class="c z" style="left:260px;top:490px">0.00</div>
<div class="c z" style="left:302px;top:490px">0.00</div>
<div class="c z" style="left:344px;top:490px">0.00</div>
<div class="c z" style="left:386px;top:490px">0.00</div>
<div class="c n" style="left:428px;top:490px;background:#ffc56e">-2.11</div>
<div class="c n" style="left:470px;top:490px;background:#ffd26f">-3.16</div>
<div class="c n" style="left:512px;top:490px;background:#ffcd6e">-2.81</div>
<div class="c n" style="left:554px;top:490px;background:#ffc96e">-2.46</div>
<div class="c p" style="left:596px;top:490px;background:#ff946a">1.76</div>
<div class="c p" style="left:638px;top:490px;background:#ff7967">3.87</div>
<div class="c p" style="left:680px;top:490px;background:#ff7967">3.87</div>
<div class="c p" style="left:722px;top:490px;background:#ff8268">3.16</div>
<div class="c p" style="left:764px;top:490px;background:#ff8268">3.16</div>
<div class="c p" style="left:806px;top:490px;background:#ff7467">4.22</div>
<div class="c h" style="left:218px;top:508px">6400</div>
<div class="c z" style="left:260px;top:508px">0.00</div>
<div class="c z" style="left:302px;top:508px">0.00</div>
<div class="c z" style="left:344px;top:508px">0.00</div>
<div class="c z" style="left:386px;top:508px">0.00</div>
<div class="c z" style="left:428px;top:508px">0.00</div>
<div class="c n" style="left:470px;top:508px;background:#ffc16d">-1.76</div>
<div class="c n" style="left:512px;top:508px;background:#ffbc6d">-1.41</div>
<div class="c n" style="left:554px;top:508px;background:#ffb86d">-1.05</div>
<div class="c p" style="left:596px;top:508px;background:#ffa26b">0.70</div>
<div class="c p" style="left:638px;top:508px;background:#ff9069">2.11</div>
<div class="c p" style="left:680px;top:508px;background:#ff9069">2.11</div>
<div class="c p" style="left:722px;top:508px;background:#ff8b69">2.46</div>
<div class="c p" style="left:764px;top:508px;background:#ff8b69">2.46</div>
<div class="c p" style="left:806px;top:508px;background:#ff946a">1.76</div>
<div class="c h" style="left:218px;top:526px">6800</div>
<div class="c z" style="left:260px;top:526px">0.00</div>
<div class="c z" style="left:302px;top:526px">0.00</div>
<div class="c z" style="left:344px;top:526px">0.00</div>
<div class="c z" style="left:386px;top:526px">0.00</div>
<div class="c z" style="left:428px;top:526px">0.00</div>
<div class="c n" style="left:470px;top:526px;background:#ffc16d">-1.76</div>
<div class="c n" style="left:512px;top:526px;background:#ffcd6e">-2.81</div>
<div class="c n" style="left:554px;top:526px;background:#ffcd6e">-2.81</div>
<div class="c z" style="left:596px;top:526px">0.00</div>
<div class="c p" style="left:638px;top:526px;background:#ffa66b">0.35</div>
<div class="c p" style="left:680px;top:526px;background:#ffa26b">0.70</div>
<div class="c p" style="left:722px;top:526px;background:#ff9d6a">1.05</div>
<div class="c p" style="left:764px;top:526px;background:#ff9d6a">1.05</div>
<div class="c p" style="left:806px;top:526px;background:#ffa26b">0.70</div>
<div class="c h" style="left:218px;top:544px">7000</div>
<div class="c z" style="left:260px;top:544px">0.00</div>
<div class="c z" style="left:302px;top:544px">0.00</div>
<div class="c z" style="left:344px;top:544px">0.00</div>
<div class="c z" style="left:386px;top:544px">0.00</div>
<div class="c z" style="left:428px;top:544px">0.00</div>
<div class="c n" style="left:470px;top:544px;background:#ffbc6d">-1.41</div>
<div class="c n" style="left:512px;top:544px;background:#ffde70">-4.22</div>
<div class="c n" style="left:554px;top:544px;background:#ffde70">-4.22</div>
<div class="c n" style="left:596px;top:544px;background:#ffcd6e">-2.81</div>
<div class="c n" style="left:638px;top:544px;background:#ffc56e">-2.11</div>
<div class="c n" style="left:680px;top:544px;background:#ffbc6d">-1.41</div>
<div class="c n" style="left:722px;top:544px;background:#ffb86d">-1.05</div>
<div class="c n" style="left:764px;top:544px;background:#ffb86d">-1.05</div>
<div class="c n" style="left:806px;top:544px;background:#ffb86d">-1.05</div>
<div class="c h" style="left:218px;top:562px">7450</div>
<div class="c z" style="left:260px;top:562px">0.00</div>
<div class="c z" style="left:302px;top:562px">0.00</div>
<div class="c z" style="left:344px;top:562px">0.00</div>
<div class="c z" style="left:386px;top:562px">0.00</div>
<div class="c z" style="left:428px;top:562px">0.00</div>
<div class="c n" style="left:470px;top:562px;background:#ffbc6d">-1.41</div>
<div class="c n" style="left:512px;top:562px;background:#ffef71">-5.62</div>
<div class="c n" style="left:554px;top:562px;background:#ffe270">-4.57</div>
<div class="c n" style="left:596px;top:562px;background:#ffda6f">-3.87</div>
<div class="c n" style="left:638px;top:562px;background:#ffd66f">-3.52</div>
<div class="c n" style="left:680px;top:562px;background:#ffc96e">-2.46</div>
<div class="c n" style="left:722px;top:562px;background:#ffbc6d">-1.41</div>
<div class="c n" style="left:764px;top:562px;background:#ffc16d">-1.76</div>
<div class="c n" style="left:806px;top:562px;background:#ffc16d">-1.76</div>
<div class="c h" style="left:218px;top:580px">7600</div>
<div class="c n" style="left:260px;top:580px;background:#9999ff">-43.95</div>
<div class="c n" style="left:302px;top:580px;background:#9999ff">-43.95</div>
<div class="c n" style="left:344px;top:580px;background:#9999ff">-43.95</div>
<div class="c n" style="left:386px;top:580px;background:#93c7ff">-37.97</div>
<div class="c n" style="left:428px;top:580px;background:#8fe9ff">-34.10</div>
<div class="c n" style="left:470px;top:580px;background:#8df5ff">-32.70</div>
<div class="c n" style="left:512px;top:580px;background:#8bfff2">-30.23</div>
<div class="c n" style="left:554px;top:580px;background:#89ffdd">-28.12</div>
<div class="c n" style="left:596px;top:580px;background:#88ffd6">-27.42</div>
<div class="c n" style="left:638px;top:580px;background:#88ffd3">-27.07</div>
<div class="c n" style="left:680px;top:580px;background:#86ffc4">-25.66</div>
<div class="c n" style="left:722px;top:580px;background:#85ffb9">-24.61</div>
<div class="c n" style="left:764px;top:580px;background:#84ffb2">-23.91</div>
<div class="c n" style="left:806px;top:580px;background:#84ffae">-23.55</div>
<div class="a" id="status"></div>
<div class="a" id="prog"></div>
<div class="a" id="ready">Ready...</div>
</body>
</html>
